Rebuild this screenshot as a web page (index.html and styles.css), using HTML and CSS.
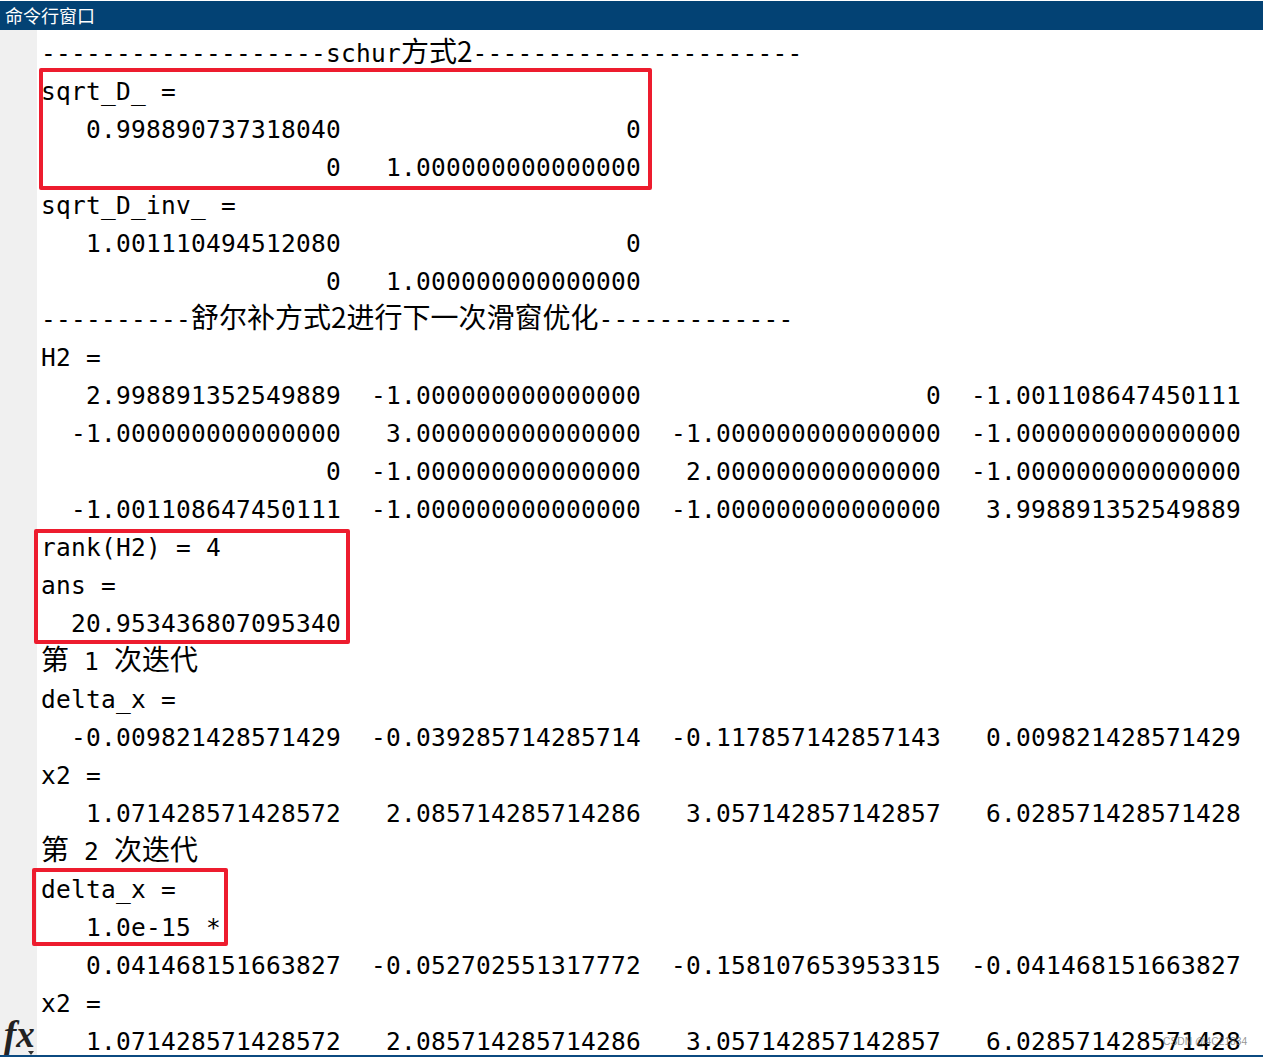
FILE: index.html
```html
<!DOCTYPE html>
<html lang="zh-CN">
<head>
<meta charset="utf-8">
<title>命令行窗口</title>
<link rel="stylesheet" href="styles.css">
</head>
<body>
<div class="window">
  <header class="titlebar">命令行窗口</header>
  <div class="main">
    <aside class="gutter">
      <span class="fx">fx</span>
      <span class="fx-caret"></span>
    </aside>
    <pre class="console">-------------------schur<span class="cjk">方式2</span>----------------------
sqrt_D_ =
   0.998890737318040                   0
                   0   1.000000000000000
sqrt_D_inv_ =
   1.001110494512080                   0
                   0   1.000000000000000
----------<span class="cjk">舒尔补方式2进行下一次滑窗优化</span>-------------
H2 =
   2.998891352549889  -1.000000000000000                   0  -1.001108647450111
  -1.000000000000000   3.000000000000000  -1.000000000000000  -1.000000000000000
                   0  -1.000000000000000   2.000000000000000  -1.000000000000000
  -1.001108647450111  -1.000000000000000  -1.000000000000000   3.998891352549889
rank(H2) = 4
ans =
  20.953436807095340
<span class="cjk">第</span> 1 <span class="cjk">次迭代</span>
delta_x =
  -0.009821428571429  -0.039285714285714  -0.117857142857143   0.009821428571429
x2 =
   1.071428571428572   2.085714285714286   3.057142857142857   6.028571428571428
<span class="cjk">第</span> 2 <span class="cjk">次迭代</span>
delta_x =
   1.0e-15 *
   0.041468151663827  -0.052702551317772  -0.158107653953315  -0.041468151663827
x2 =
   1.071428571428572   2.085714285714286   3.057142857142857   6.028571428571428</pre>
  </div>
  <div class="mark mark-a"></div>
  <div class="mark mark-b"></div>
  <div class="mark mark-c"></div>
  <div class="watermark">CSDN @4C21834</div>
</div>
</body>
</html>
```
FILE: styles.css
```css
html, body {
  margin: 0;
  padding: 0;
  background: #fff;
}
.window {
  position: relative;
  width: 1263px;
  height: 1057px;
  overflow: hidden;
  display: flex;
  flex-direction: column;
  box-sizing: border-box;
  padding-top: 1px;
  border-bottom: 2px solid #0b4a80;
}
.titlebar {
  height: 29px;
  flex: none;
  box-sizing: border-box;
  padding-left: 5px;
  background: #034274;
  color: #fff;
  font: 18px/28px "Noto Sans CJK SC", sans-serif;
}
.main {
  flex: 1;
  min-height: 0;
  display: flex;
}
.gutter {
  position: relative;
  width: 37px;
  flex: none;
  background: #f0f0f0;
}
.fx {
  position: absolute;
  left: 4px;
  bottom: 0;
  font: italic bold 37px/40px "Liberation Serif", serif;
  color: #222;
}
.fx-caret {
  position: absolute;
  left: 28px;
  bottom: 0;
  border-left: 3px solid transparent;
  border-right: 3px solid transparent;
  border-top: 4px solid #333;
}
.console {
  flex: 1;
  min-width: 0;
  margin: 0;
  padding: 5px 0 0 4px;
  overflow: hidden;
  color: #000;
  font: 24.5px/38px "DejaVu Sans Mono", "Noto Sans CJK SC", monospace;
  letter-spacing: 0.25px;
}
.cjk {
  font-family: "Noto Sans CJK SC", sans-serif;
  font-size: 28px;
  letter-spacing: 0;
  line-height: 1;
}
.mark {
  position: absolute;
  box-sizing: border-box;
  border: 4px solid #ed1c2e;
  border-radius: 2px;
}
.mark-a { left: 39px; top: 68px; width: 613px; height: 122px; }
.mark-b { left: 34px; top: 529px; width: 316px; height: 115px; }
.mark-c { left: 32px; top: 868px; width: 196px; height: 78px; }
.watermark {
  position: absolute;
  left: 1163px;
  top: 1035px;
  color: rgba(100, 100, 100, 0.7);
  font: 10.3px/14px "Liberation Sans", sans-serif;
}
```
